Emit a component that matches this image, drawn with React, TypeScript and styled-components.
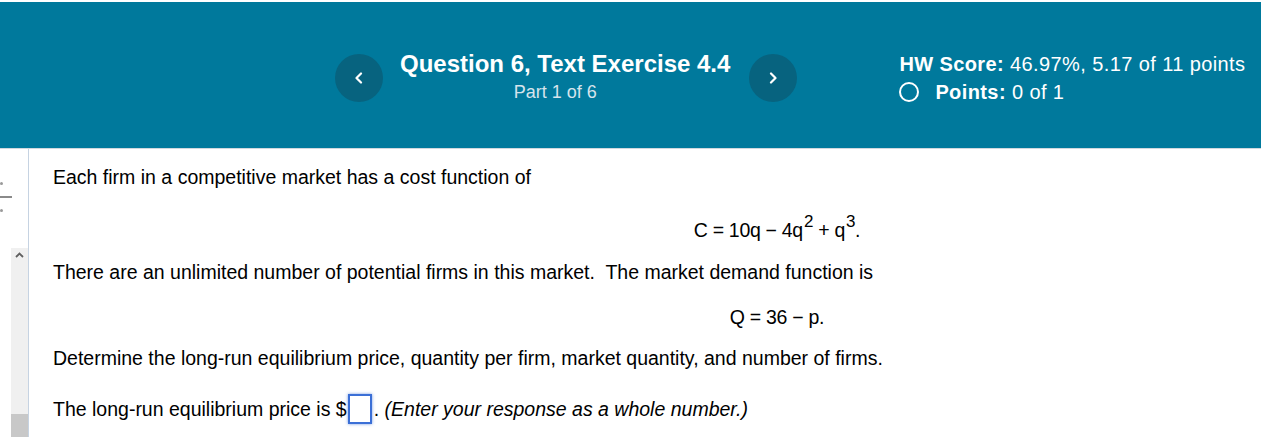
import React from 'react';
import styled, { createGlobalStyle } from 'styled-components';

const GlobalStyle = createGlobalStyle`
  html, body {
    margin: 0;
    padding: 0;
    background: #ffffff;
    font-family: "Liberation Sans", Arial, sans-serif;
  }
`;

const Page = styled.div`
  height: 100vh;
  display: flex;
  flex-direction: column;
  overflow: hidden;
  padding-top: 2px;
  box-sizing: border-box;
`;

const Header = styled.header`
  height: 146px;
  flex-shrink: 0;
  background: #00799c;
  border-bottom: 1px solid #cfd8de;
  display: flex;
  align-items: center;
  color: #ffffff;
`;

const NavGroup = styled.div`
  display: flex;
  align-items: center;
  margin-left: 335px;
  margin-top: 6px;
`;

const NavButton = styled.button`
  width: 48px;
  height: 48px;
  border-radius: 50%;
  border: none;
  background: #07637f;
  color: #ffffff;
  display: flex;
  align-items: center;
  justify-content: center;
  padding: 0;
  cursor: pointer;
`;

const TitleBlock = styled.div`
  display: flex;
  flex-direction: column;
  align-items: center;
  margin: -2px 19px 0 17px;
`;

const Title = styled.div`
  font-size: 24px;
  font-weight: 700;
  line-height: 30px;
`;

const Subtitle = styled.div`
  font-size: 18px;
  color: #d6e4ec;
  line-height: 26px;
  margin-right: 20px;
`;

const Score = styled.div`
  margin-left: 102px;
  margin-top: 6px;
  font-size: 20px;
  letter-spacing: 0.4px;
  line-height: 28px;
`;

const ScoreRow = styled.div`
  display: flex;
  align-items: center;
  white-space: nowrap;
`;

const Ring = styled.span`
  width: 16px;
  height: 16px;
  border: 2.5px solid #ffffff;
  border-radius: 50%;
  margin: 0 16px 0 0;
  flex-shrink: 0;
`;

const Body = styled.div`
  flex: 1;
  display: flex;
  min-height: 0;
`;

const SidePanel = styled.aside`
  width: 28px;
  flex-shrink: 0;
  border-right: 1px solid #c6d3e2;
  display: flex;
  flex-direction: column;
  padding-top: 33px;
`;

const DivideIcon = styled.div`
  width: 12px;
  height: 30px;
  display: flex;
  flex-direction: column;
  justify-content: space-between;
  align-items: flex-start;
`;

const Dot = styled.span`
  width: 3px;
  height: 3px;
  border-radius: 50%;
  background: #9a9a9a;
`;

const Bar = styled.span`
  width: 12px;
  height: 2px;
  background: #8a8a8a;
`;

const Track = styled.div`
  flex: 1;
  margin: 36px 0 0 11px;
  background: #f0f0f0;
  display: flex;
  flex-direction: column;
  align-items: center;
`;

const Arrow = styled.div`
  margin-top: 4px;
  line-height: 0;
`;

const Thumb = styled.div`
  margin-top: auto;
  align-self: stretch;
  height: 23px;
  background: #c8c8c8;
`;

const Content = styled.main`
  flex: 1;
  padding: 17px 0 0 24px;
  font-size: 19.5px;
  line-height: 23px;
  color: #000000;
  overflow: hidden;
`;

const Para = styled.p<{ $gap?: number }>`
  margin: ${(p) => p.$gap ?? 0}px 0 0;
  white-space: nowrap;
`;

const Formula = styled.div<{ $gap: number }>`
  width: 1448px;
  text-align: center;
  margin-top: ${(p) => p.$gap}px;
  white-space: nowrap;
  letter-spacing: -0.3px;

  sup {
    font-size: 17px;
    line-height: 0;
    vertical-align: 10px;
    margin-left: 1px;
  }
`;

const AnswerBox = styled.span`
  display: inline-block;
  width: 20px;
  height: 26px;
  border: 2px solid #3b6fd6;
  box-shadow: 0 0 3px rgba(59, 111, 214, 0.7);
  vertical-align: -8px;
  margin: 0 2px 0 1px;
  background: #ffffff;
`;

const Hint = styled.em`
  font-style: italic;
`;

const Chevron = ({ dir }: { dir: 'left' | 'right' }) => (
  <svg width="10" height="12" viewBox="0 0 10 12" fill="none">
    <path
      d={dir === 'left' ? 'M7 1.5 L2.5 6 L7 10.5' : 'M3 1.5 L7.5 6 L3 10.5'}
      stroke="#ffffff"
      strokeWidth="2.2"
      strokeLinecap="round"
      strokeLinejoin="round"
    />
  </svg>
);

export default function App() {
  return (
    <>
      <GlobalStyle />
      <Page>
        <Header>
          <NavGroup>
            <NavButton aria-label="Previous question">
              <Chevron dir="left" />
            </NavButton>
            <TitleBlock>
              <Title>Question 6, Text Exercise 4.4</Title>
              <Subtitle>Part 1 of 6</Subtitle>
            </TitleBlock>
            <NavButton aria-label="Next question">
              <Chevron dir="right" />
            </NavButton>
          </NavGroup>
          <Score>
            <ScoreRow>
              <b>HW Score:</b>&nbsp;46.97%, 5.17 of 11 points
            </ScoreRow>
            <ScoreRow>
              <Ring />
              <b>Points:</b>&nbsp;0 of 1
            </ScoreRow>
          </Score>
        </Header>
        <Body>
          <SidePanel>
            <DivideIcon>
              <Dot />
              <Bar />
              <Dot />
            </DivideIcon>
            <Track>
              <Arrow>
                <svg width="9" height="6" viewBox="0 0 9 6">
                  <path d="M1 5 L4.5 1.5 L8 5" stroke="#606060" strokeWidth="1.8" fill="none" />
                </svg>
              </Arrow>
              <Thumb />
            </Track>
          </SidePanel>
          <Content>
            <Para>Each firm in a competitive market has a cost function of</Para>
            <Formula $gap={30}>
              C = 10q − 4q<sup>2</sup> + q<sup>3</sup>.
            </Formula>
            <Para $gap={19}>
              There are an unlimited number of potential firms in this market.&nbsp; The market demand function is
            </Para>
            <Formula $gap={22}>Q = 36 − p.</Formula>
            <Para $gap={18}>
              Determine the long-run equilibrium price, quantity per firm, market quantity, and number of firms.
            </Para>
            <Para $gap={24}>
              The long-run equilibrium price is $<AnswerBox />. <Hint>(Enter your response as a whole number.)</Hint>
            </Para>
          </Content>
        </Body>
      </Page>
    </>
  );
}
